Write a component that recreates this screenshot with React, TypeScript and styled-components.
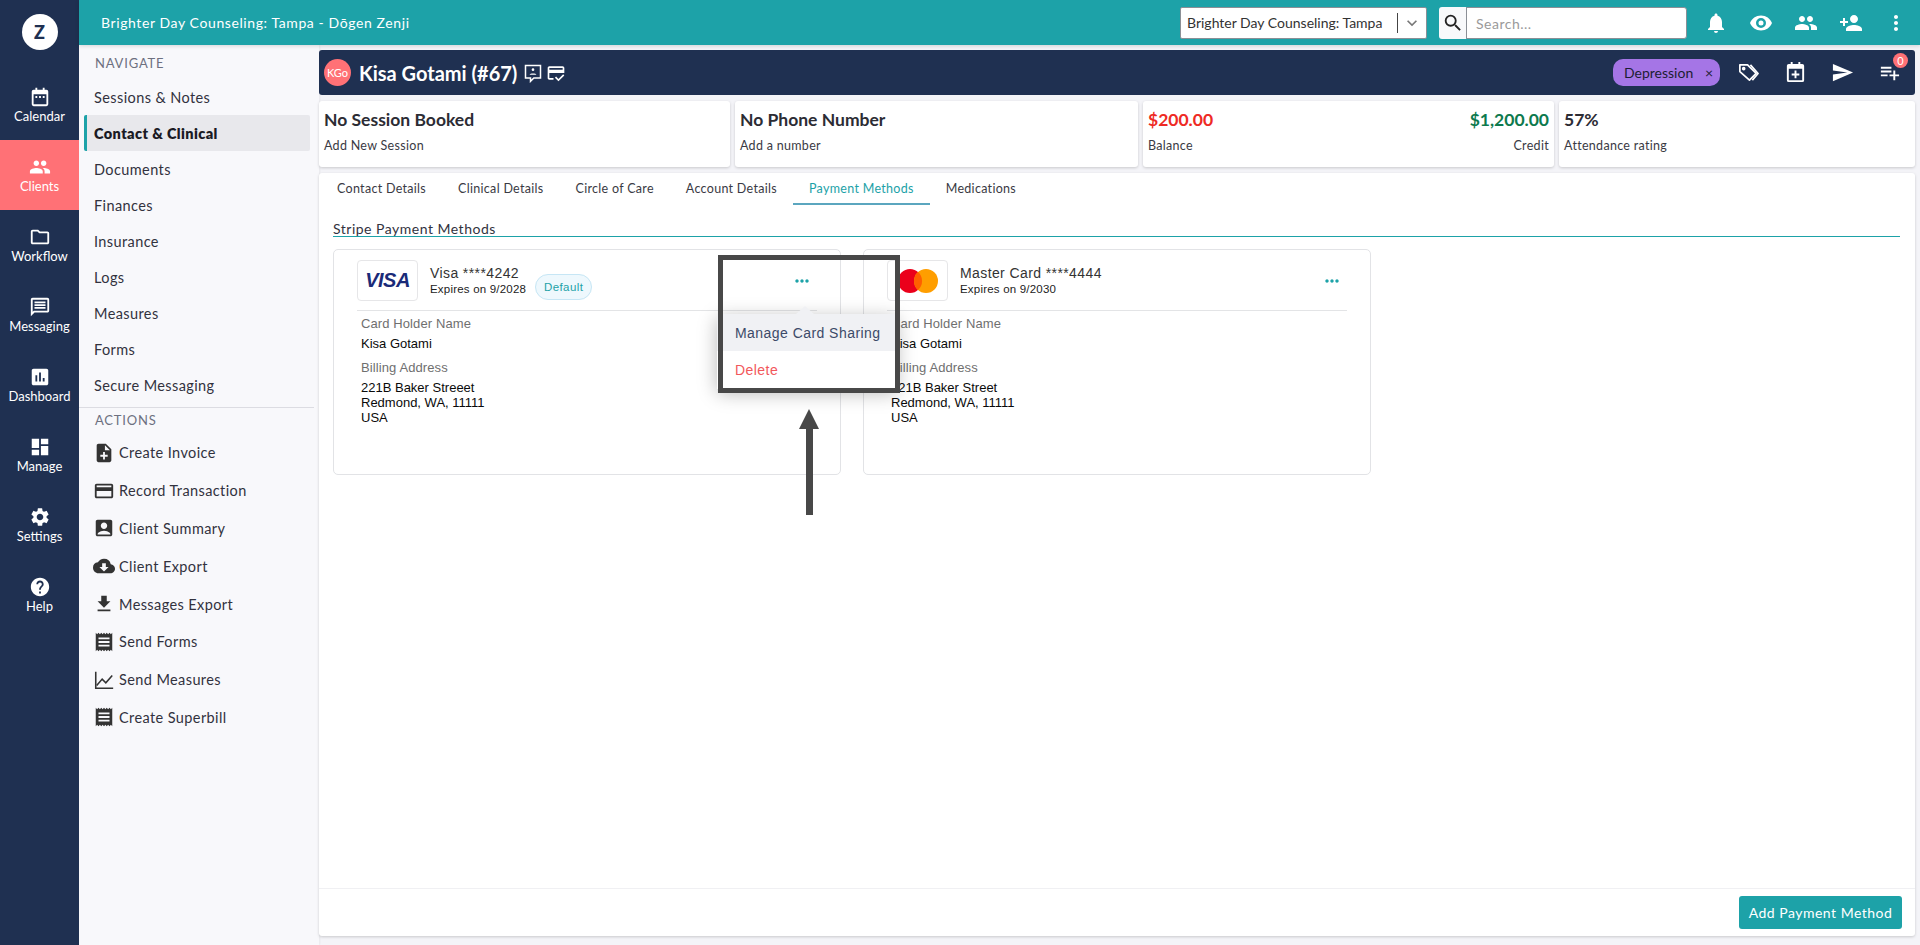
import React from 'react';
import styled, { createGlobalStyle } from 'styled-components';
import {
  MdPeople, MdOutlineFolder, MdOutlineMessage, MdAssessment, MdDashboard, MdSettings, MdHelp,
  MdNoteAdd, MdOutlineCreditCard, MdAccountBox, MdCloudDownload, MdFileDownload, MdReceipt,
  MdNotifications, MdPersonAdd, MdMoreVert, MdSearch, MdKeyboardArrowDown, MdSend,
  MdPlaylistAdd, MdOutlineCreditScore, MdOutlineEvent, MdMoreHoriz,
} from 'react-icons/md';

const GlobalStyle = createGlobalStyle`
  * { box-sizing: border-box; }
  html, body { margin: 0; padding: 0; height: 100%; }
  body {
    background-color: #f4f4f8;
    font-family: "Lato", "Liberation Sans", sans-serif;
    color: #2c2c38;
    overflow: hidden;
  }
`;

const Shell = styled.div`
  display: grid;
  grid-template-columns: 79px 1fr;
  height: 945px;
`;

const Rail = styled.nav`
  background-color: #1f3051;
  display: flex;
  flex-direction: column;
  align-items: stretch;
`;

const RailLogo = styled.div`
  width: 36px;
  height: 36px;
  margin: 14px auto 20px;
  border-radius: 50%;
  background: #fff;
  color: #1f3051;
  font-weight: 900;
  font-size: 18px;
  display: flex;
  align-items: center;
  justify-content: center;
`;

const RailItem = styled.div<{ $active?: boolean }>`
  height: 70px;
  display: flex;
  flex-direction: column;
  align-items: center;
  justify-content: center;
  gap: 0;
  color: #fff;
  font-size: 13px;
  background-color: ${(p) => (p.$active ? '#ff7176' : 'transparent')};
  svg { font-size: 22px; }
`;

const Right = styled.div`
  display: flex;
  flex-direction: column;
  min-width: 0;
`;

const TopBar = styled.header`
  height: 45px;
  background-color: #1da2a8;
  display: flex;
  align-items: center;
  padding: 0 12px 0 22px;
  color: #fff;
  box-shadow: 0 1px 4px rgba(0, 0, 0, 0.15);
  z-index: 2;
`;

const TopTitle = styled.div`
  font-size: 14px;
  letter-spacing: 0.6px;
  flex: 1;
`;

const LocationSelect = styled.div`
  width: 247px;
  height: 32px;
  background: #fff;
  border-radius: 2px;
  border: 1px solid #8b8f96;
  color: #333;
  font-size: 14px;
  display: flex;
  align-items: center;
  padding-left: 6px;
  margin-right: 12px;
  span { flex: 1; white-space: nowrap; border-right: 1px solid #444; line-height: 20px; }
  svg { font-size: 20px; color: #777; margin: 0 4px; }
`;

const SearchButton = styled.div`
  width: 27px;
  height: 32px;
  background: #f8f9fb;
  color: #222;
  font-size: 22px;
  display: flex;
  align-items: center;
  justify-content: center;
  border-radius: 3px 0 0 3px;
`;

const SearchInput = styled.div`
  width: 221px;
  height: 32px;
  background: #fff;
  border: 1px solid #8b8f96;
  border-radius: 0 3px 3px 0;
  color: #9a9a9a;
  font-size: 14px;
  letter-spacing: 0.5px;
  padding: 7px 9px;
  margin-right: 17px;
`;

const TopIcons = styled.div`
  display: flex;
  align-items: center;
  gap: 21px;
  font-size: 24px;
  svg { display: block; }
`;

const Body = styled.div`
  flex: 1;
  display: flex;
  min-height: 0;
`;

const Sidebar = styled.aside`
  width: 240px;
  background: #f8f8fb;
  padding-top: 9px;
  box-shadow: 1px 0 2px rgba(0, 0, 0, 0.05);
`;

const SectionLabel = styled.div`
  font-size: 13px;
  letter-spacing: 0.8px;
  color: #6d7080;
  padding-left: 16px;
  height: 18px;
  line-height: 18px;
`;

const NavList = styled.div`
  margin-top: 7px;
  padding-right: 9px;
`;

const NavItem = styled.div<{ $active?: boolean }>`
  height: 36px;
  margin-left: 5px;
  display: flex;
  align-items: center;
  padding-left: 7px;
  font-size: 14.5px;
  letter-spacing: 0.4px;
  border-radius: 2px;
  font-weight: ${(p) => (p.$active ? 800 : 400)};
  color: ${(p) => (p.$active ? '#1a1a24' : '#32323e')};
  background: ${(p) => (p.$active ? '#e8e8ec' : 'transparent')};
  border-left: 3px solid ${(p) => (p.$active ? '#1da2a8' : 'transparent')};
`;

const SideDivider = styled.hr`
  border: none;
  border-top: 1px solid #dcdce2;
  margin: 4px 5px 3px 0;
`;

const ActionList = styled.div`
  margin-top: 5px;
`;

const ActionItem = styled.div`
  height: 37.8px;
  display: flex;
  align-items: center;
  padding-left: 14px;
  font-size: 14.5px;
  letter-spacing: 0.4px;
  color: #32323e;
  svg { font-size: 22px; color: #333; flex: none; margin-right: 4px; width: 22px; }
`;

const Main = styled.main`
  flex: 1;
  min-width: 0;
  padding: 5px 5px 9px 0;
  display: flex;
  flex-direction: column;
  gap: 6px;
`;

const ClientBar = styled.div`
  height: 45px;
  background: #1f3051;
  border-radius: 3px;
  display: flex;
  align-items: center;
  color: #fff;
  padding: 0 14px 0 5px;
`;

const Avatar = styled.div`
  width: 27px;
  height: 27px;
  border-radius: 50%;
  background: #ff7176;
  font-size: 11px;
  display: flex;
  align-items: center;
  justify-content: center;
  margin-right: 8px;
`;

const ClientName = styled.div`
  font-size: 20px;
  font-weight: 700;
  margin-right: 6px;
`;

const ClientIcons = styled.div`
  display: flex;
  gap: 3px;
  font-size: 20px;
  flex: 1;
  svg { display: block; }
`;

const Chip = styled.div`
  width: 107px;
  height: 27px;
  border-radius: 10px;
  background: #a575e6;
  color: #1d1d33;
  font-size: 14px;
  display: flex;
  align-items: center;
  justify-content: space-between;
  padding: 0 7px 0 11px;
  margin-right: 17px;
`;

const BarIcons = styled.div`
  display: flex;
  align-items: center;
  gap: 24px;
  font-size: 23px;
  svg { display: block; }
`;

const BadgeWrap = styled.div`
  position: relative;
`;

const CountBadge = styled.span`
  position: absolute;
  top: -8px;
  right: -7px;
  width: 15px;
  height: 15px;
  border-radius: 50%;
  background: #ff7176;
  color: #fff;
  font-size: 11px;
  text-align: center;
  line-height: 15px;
`;

const StatRow = styled.div`
  display: grid;
  grid-template-columns: 411px 403px 411px 1fr;
  gap: 5px;
  height: 66px;
`;

const StatCard = styled.div`
  background: #fff;
  border-radius: 3px;
  box-shadow: 0 1px 3px rgba(0, 0, 0, 0.18);
  padding: 8px 5px 0;
`;

const StatLine = styled.div`
  display: flex;
  justify-content: space-between;
`;

const StatValue = styled.div<{ $color?: string }>`
  font-size: 17.5px;
  font-weight: 700;
  height: 21px;
  line-height: 21px;
  color: ${(p) => p.$color || '#2c2c34'};
`;

const StatLabel = styled.div`
  font-size: 12.5px;
  letter-spacing: 0.3px;
  margin-top: 8px;
  color: #3a3a44;
`;

const Panel = styled.section`
  flex: 1;
  background: #fff;
  border-radius: 3px;
  box-shadow: 0 1px 3px rgba(0, 0, 0, 0.18);
  display: flex;
  flex-direction: column;
  min-height: 0;
`;

const Tabs = styled.div`
  display: flex;
  height: 32px;
  padding-left: 2px;
`;

const Tab = styled.div<{ $active?: boolean }>`
  padding: 0 16px;
  height: 32px;
  font-size: 12.5px;
  letter-spacing: 0.3px;
  display: flex;
  align-items: center;
  color: ${(p) => (p.$active ? '#1da2a8' : '#3a3a44')};
  border-bottom: 2px solid ${(p) => (p.$active ? '#5ba6bf' : 'transparent')};
`;

const PanelBody = styled.div`
  flex: 1;
  padding: 15px 15px 0 14px;
`;

const PanelTitle = styled.div`
  font-size: 14px;
  letter-spacing: 0.5px;
  height: 17px;
  line-height: 17px;
  border-bottom: 1px solid #1da2a8;
  color: #32323e;
`;

const CardGrid = styled.div`
  display: flex;
  gap: 22px;
  margin-top: 12px;
`;

const PayCard = styled.article`
  position: relative;
  width: 508px;
  height: 226px;
  border: 1px solid #e2e3e6;
  border-radius: 5px;
  padding: 10px 23px 0 23px;
  font-family: "Liberation Sans", sans-serif;
`;

const CardHead = styled.div`
  display: flex;
  align-items: center;
  height: 51px;
  border-bottom: 1px solid #e3e4e6;
  padding-bottom: 9px;
`;

const LogoBox = styled.div`
  width: 61px;
  height: 41px;
  border: 1px solid #e6e6e8;
  border-radius: 4px;
  display: flex;
  align-items: center;
  justify-content: center;
  margin-right: 12px;
  background: #fff;
`;

const VisaMark = styled.span`
  color: #1a2a78;
  font-weight: 700;
  font-style: italic;
  font-size: 20px;
  letter-spacing: -0.5px;
`;

const CardInfo = styled.div`
  flex: 1;
`;

const CardName = styled.div`
  font-size: 14px;
  letter-spacing: 0.4px;
  color: #333;
  line-height: 16px;
`;

const ExpiryRow = styled.div`
  display: flex;
  align-items: center;
  font-size: 11.5px;
  color: #222;
  letter-spacing: 0.2px;
  height: 16px;
`;

const DefaultPill = styled.span`
  margin-left: 9px;
  width: 57px;
  height: 26px;
  border: 1px solid #c6e6f5;
  background: #eef8fd;
  border-radius: 13px;
  color: #1da2a8;
  font-size: 11.5px;
  letter-spacing: 0.4px;
  display: flex;
  align-items: center;
  justify-content: center;
  margin-top: -4px;
`;

const DotsButton = styled.div`
  color: #1da2a8;
  font-size: 20px;
  display: flex;
  margin-right: 5px;
`;

const CardFields = styled.div`
  padding: 4px 0 0 4px;
`;

const FieldLabel = styled.div`
  font-size: 13px;
  color: #6f6f6f;
  line-height: 18px;
  letter-spacing: 0.1px;
  margin-top: 0;
`;

const FieldValue = styled.div`
  font-size: 13px;
  color: #0a0a0a;
  line-height: 15px;
  margin: 3px 0 8px;
`;

const Popup = styled.div`
  position: absolute;
  left: 383px;
  top: 64px;
  width: 180px;
  height: 75px;
  background: #fff;
  box-shadow: 0 4px 18px rgba(0, 0, 0, 0.28);
  z-index: 3;
  &::before {
    content: '';
    position: absolute;
    left: 79px;
    top: -8px;
    width: 0;
    height: 0;
    border-left: 9px solid transparent;
    border-right: 9px solid transparent;
    border-bottom: 8px solid #f0f1f4;
  }
`;

const PopupItem = styled.div<{ $hover?: boolean; $danger?: boolean }>`
  height: 37px;
  display: flex;
  align-items: center;
  padding-left: 18px;
  font-family: "Liberation Sans", sans-serif;
  font-size: 14px;
  letter-spacing: 0.45px;
  background: ${(p) => (p.$hover ? '#f0f1f4' : '#fff')};
  color: ${(p) => (p.$danger ? '#f2575b' : '#3c4a68')};
`;

const HighlightFrame = styled.div`
  position: absolute;
  left: 384px;
  top: 5px;
  width: 182px;
  height: 138px;
  border: 5.5px solid #484848;
  z-index: 4;
`;

const ArrowShaft = styled.div`
  position: absolute;
  left: 472px;
  top: 175px;
  width: 7px;
  height: 90px;
  background: #484848;
  z-index: 4;
`;

const ArrowHead = styled.div`
  position: absolute;
  left: 465px;
  top: 159px;
  width: 0;
  height: 0;
  border-left: 10px solid transparent;
  border-right: 10px solid transparent;
  border-bottom: 20px solid #484848;
  z-index: 4;
`;

const PanelFooter = styled.footer`
  height: 48px;
  border-top: 1px solid #f0f0f3;
  display: flex;
  justify-content: flex-end;
  align-items: flex-start;
  padding: 7px 13px 0 0;
`;

const PrimaryButton = styled.button`
  width: 163px;
  height: 33px;
  background: #1da2a8;
  color: #fff;
  border: none;
  border-radius: 3px;
  font-family: "Lato", sans-serif;
  font-size: 14px;
  letter-spacing: 0.5px;
`;

const CalendarIcon = () => (
  <svg width="1em" height="1em" viewBox="0 0 24 24" fill="currentColor">
    <path fillRule="evenodd" d="M7 2h2v2h6V2h2v2h2a2 2 0 0 1 2 2v14a2 2 0 0 1-2 2H5a2 2 0 0 1-2-2V6a2 2 0 0 1 2-2h2V2zM5 9v11h14V9H5z" />
    <path d="M7 11h2v2H7zM11 11h2v2h-2zM15 11h2v2h-2z" />
  </svg>
);

const ChartAxisIcon = () => (
  <svg width="1em" height="1em" viewBox="0 0 24 24" fill="none" stroke="currentColor" strokeWidth="1.7">
    <path d="M3 3v18h19" />
    <path d="M4 18l6-7 4 4 7-8" />
  </svg>
);

const EyeIcon = () => (
  <svg width="1em" height="1em" viewBox="0 0 24 24" fill="currentColor">
    <path fillRule="evenodd" d="M12 4.5C7 4.5 2.7 7.6 1 12c1.7 4.4 6 7.5 11 7.5s9.3-3.1 11-7.5c-1.7-4.4-6-7.5-11-7.5zM12 17a5 5 0 1 1 0-10 5 5 0 0 1 0 10zm0-2.5a2.5 2.5 0 1 0 0-5 2.5 2.5 0 0 0 0 5z" />
  </svg>
);

const CommentPersonIcon = () => (
  <svg width="1em" height="1em" viewBox="0 0 24 24" fill="none" stroke="currentColor" strokeWidth="1.8">
    <path d="M3 3h18v15h-8l-4 4v-4H3z" />
    <circle cx="12" cy="8" r="1.6" fill="currentColor" stroke="none" />
    <path d="M8 14c0-2 8-2 8 0" fill="currentColor" stroke="none" />
  </svg>
);

const TagsIcon = () => (
  <svg width="1em" height="1em" viewBox="0 0 24 24" fill="none" stroke="currentColor" strokeWidth="1.8" strokeLinejoin="round">
    <path d="M3 4h8l9 9-7 7-10-9z" />
    <path d="M14 4l8 9-6 7" />
    <circle cx="7" cy="8" r="1" />
  </svg>
);

const EventAddIcon = () => (
  <svg width="1em" height="1em" viewBox="0 0 24 24" fill="currentColor">
    <path fillRule="evenodd" d="M7 1h2v2h6V1h2v2h2a2 2 0 0 1 2 2v15a2 2 0 0 1-2 2H5a2 2 0 0 1-2-2V5a2 2 0 0 1 2-2h2V1zM5 8v12h14V8H5z" />
    <path d="M11 10h2v3h3v2h-3v3h-2v-3H8v-2h3z" />
  </svg>
);

const MasterMark = () => (
  <svg width="42" height="26" viewBox="0 0 42 26">
    <circle cx="13" cy="13" r="12" fill="#eb001b" />
    <circle cx="29" cy="13" r="12" fill="#ff9e00" />
    <path d="M21 4a12 12 0 0 1 0 18 12 12 0 0 1 0-18z" fill="#ff5f00" />
  </svg>
);

const navItems = ['Sessions & Notes', 'Contact & Clinical', 'Documents', 'Finances', 'Insurance', 'Logs', 'Measures', 'Forms', 'Secure Messaging'];

const railItems = [
  { label: 'Calendar', icon: <CalendarIcon /> },
  { label: 'Clients', icon: <MdPeople />, active: true },
  { label: 'Workflow', icon: <MdOutlineFolder /> },
  { label: 'Messaging', icon: <MdOutlineMessage /> },
  { label: 'Dashboard', icon: <MdAssessment /> },
  { label: 'Manage', icon: <MdDashboard /> },
  { label: 'Settings', icon: <MdSettings /> },
  { label: 'Help', icon: <MdHelp /> },
];

const actions = [
  { label: 'Create Invoice', icon: <MdNoteAdd /> },
  { label: 'Record Transaction', icon: <MdOutlineCreditCard /> },
  { label: 'Client Summary', icon: <MdAccountBox /> },
  { label: 'Client Export', icon: <MdCloudDownload /> },
  { label: 'Messages Export', icon: <MdFileDownload /> },
  { label: 'Send Forms', icon: <MdReceipt /> },
  { label: 'Send Measures', icon: <ChartAxisIcon /> },
  { label: 'Create Superbill', icon: <MdReceipt /> },
];

const tabs = ['Contact Details', 'Clinical Details', 'Circle of Care', 'Account Details', 'Payment Methods', 'Medications'];

const CardBody = ({ street }: { street: string }) => (
  <CardFields>
    <FieldLabel>Card Holder Name</FieldLabel>
    <FieldValue>Kisa Gotami</FieldValue>
    <FieldLabel>Billing Address</FieldLabel>
    <FieldValue>
      {street}
      <br />
      Redmond, WA, 11111
      <br />
      USA
    </FieldValue>
  </CardFields>
);

const App = () => {
  return (
    <>
      <GlobalStyle />
      <Shell>
        <Rail>
          <RailLogo>Z</RailLogo>
          {railItems.map((item) => (
            <RailItem key={item.label} $active={item.active}>
              {item.icon}
              {item.label}
            </RailItem>
          ))}
        </Rail>
        <Right>
          <TopBar>
            <TopTitle>Brighter Day Counseling: Tampa - Dōgen Zenji</TopTitle>
            <LocationSelect>
              <span>Brighter Day Counseling: Tampa</span>
              <MdKeyboardArrowDown />
            </LocationSelect>
            <SearchButton><MdSearch /></SearchButton>
            <SearchInput>Search...</SearchInput>
            <TopIcons>
              <MdNotifications />
              <EyeIcon />
              <MdPeople />
              <MdPersonAdd />
              <MdMoreVert />
            </TopIcons>
          </TopBar>
          <Body>
            <Sidebar>
              <SectionLabel>NAVIGATE</SectionLabel>
              <NavList>
                {navItems.map((item) => (
                  <NavItem key={item} $active={item === 'Contact & Clinical'}>{item}</NavItem>
                ))}
              </NavList>
              <SideDivider />
              <SectionLabel>ACTIONS</SectionLabel>
              <ActionList>
                {actions.map((a) => (
                  <ActionItem key={a.label}>
                    {a.icon}
                    {a.label}
                  </ActionItem>
                ))}
              </ActionList>
            </Sidebar>
            <Main>
              <ClientBar>
                <Avatar>KGo</Avatar>
                <ClientName>Kisa Gotami (#67)</ClientName>
                <ClientIcons>
                  <CommentPersonIcon />
                  <MdOutlineCreditScore />
                </ClientIcons>
                <Chip>Depression <span>×</span></Chip>
                <BarIcons>
                  <TagsIcon />
                  <EventAddIcon />
                  <MdSend />
                  <BadgeWrap>
                    <MdPlaylistAdd />
                    <CountBadge>0</CountBadge>
                  </BadgeWrap>
                </BarIcons>
              </ClientBar>
              <StatRow>
                <StatCard>
                  <StatValue>No Session Booked</StatValue>
                  <StatLabel>Add New Session</StatLabel>
                </StatCard>
                <StatCard>
                  <StatValue>No Phone Number</StatValue>
                  <StatLabel>Add a number</StatLabel>
                </StatCard>
                <StatCard>
                  <StatLine>
                    <StatValue $color="#ee2a24">$200.00</StatValue>
                    <StatValue $color="#0d7a4e">$1,200.00</StatValue>
                  </StatLine>
                  <StatLine>
                    <StatLabel>Balance</StatLabel>
                    <StatLabel>Credit</StatLabel>
                  </StatLine>
                </StatCard>
                <StatCard>
                  <StatValue>57%</StatValue>
                  <StatLabel>Attendance rating</StatLabel>
                </StatCard>
              </StatRow>
              <Panel>
                <Tabs>
                  {tabs.map((t) => (
                    <Tab key={t} $active={t === 'Payment Methods'}>{t}</Tab>
                  ))}
                </Tabs>
                <PanelBody>
                  <PanelTitle>Stripe Payment Methods</PanelTitle>
                  <CardGrid>
                    <PayCard>
                      <CardHead>
                        <LogoBox><VisaMark>VISA</VisaMark></LogoBox>
                        <CardInfo>
                          <CardName>Visa ****4242</CardName>
                          <ExpiryRow>
                            Expires on 9/2028
                            <DefaultPill>Default</DefaultPill>
                          </ExpiryRow>
                        </CardInfo>
                        <DotsButton><MdMoreHoriz /></DotsButton>
                      </CardHead>
                      <CardBody street="221B Baker Streeet" />
                      <Popup>
                        <PopupItem $hover>Manage Card Sharing</PopupItem>
                        <PopupItem $danger>Delete</PopupItem>
                      </Popup>
                      <HighlightFrame />
                      <ArrowHead />
                      <ArrowShaft />
                    </PayCard>
                    <PayCard>
                      <CardHead>
                        <LogoBox><MasterMark /></LogoBox>
                        <CardInfo>
                          <CardName>Master Card ****4444</CardName>
                          <ExpiryRow>Expires on 9/2030</ExpiryRow>
                        </CardInfo>
                        <DotsButton><MdMoreHoriz /></DotsButton>
                      </CardHead>
                      <CardBody street="221B Baker Street" />
                    </PayCard>
                  </CardGrid>
                </PanelBody>
                <PanelFooter>
                  <PrimaryButton>Add Payment Method</PrimaryButton>
                </PanelFooter>
              </Panel>
            </Main>
          </Body>
        </Right>
      </Shell>
    </>
  );
};

export default App;
